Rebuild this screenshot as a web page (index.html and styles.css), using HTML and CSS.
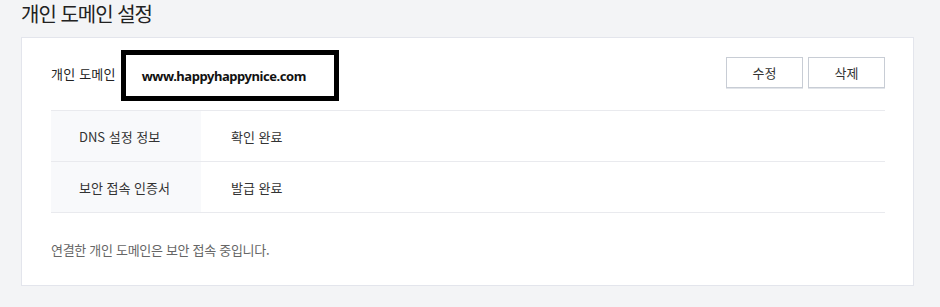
FILE: index.html
```html
<!DOCTYPE html>
<html lang="ko">
<head>
<meta charset="utf-8">
<link rel="stylesheet" href="styles.css">
</head>
<body>
<div class="page">
  <h1 class="title">개인 도메인 설정</h1>
  <section class="card">
    <div class="domain-row">
      <span class="domain-label">개인 도메인</span>
      <div class="domain-box">www.happyhappynice.com</div>
      <div class="actions">
        <button class="btn">수정</button>
        <button class="btn">삭제</button>
      </div>
    </div>
    <div class="info-table">
      <div class="info-row">
        <div class="info-key">DNS 설정 정보</div>
        <div class="info-val">확인 완료</div>
      </div>
      <div class="info-row">
        <div class="info-key">보안 접속 인증서</div>
        <div class="info-val">발급 완료</div>
      </div>
    </div>
    <p class="note">연결한 개인 도메인은 보안 접속 중입니다.</p>
  </section>
</div>
</body>
</html>
```
FILE: styles.css
```css
html, body {
  margin: 0;
  padding: 0;
  background: #f3f4f6;
}
body {
  font-family: "Noto Sans CJK KR", "Noto Sans", sans-serif;
  color: #333;
}
.page {
  width: 940px;
  height: 307px;
  padding: 0 26px 0 21px;
  box-sizing: border-box;
}
.title {
  margin: 0;
  height: 35px;
  padding-top: 2px;
  font-size: 20px;
  font-weight: 400;
  line-height: 24px;
  letter-spacing: -1px;
  color: #222;
}
.card {
  background: #fff;
  border: 1px solid #e3e5ec;
  width: 893px;
  box-sizing: border-box;
  padding: 0 28px 0 29px;
}
.domain-row {
  height: 72px;
  display: flex;
  align-items: center;
}
.domain-label {
  font-size: 13px;
  color: #222;
  margin-top: -1px;
  letter-spacing: 0.2px;
}
.domain-box {
  margin-left: 5px;
  margin-top: 3px;
  width: 218px;
  height: 51px;
  box-sizing: border-box;
  border: 5px solid #000;
  padding-left: 16px;
  display: flex;
  align-items: center;
  font-family: "Noto Sans", "Noto Sans CJK KR", sans-serif;
  font-size: 13px;
  font-weight: 700;
  color: #111;
  letter-spacing: -0.45px;
}
.actions {
  margin-left: auto;
  display: flex;
  gap: 5px;
  margin-top: -3px;
}
.btn {
  width: 77px;
  height: 31px;
  background: #fff;
  border: 1px solid #c8cdd5;
  box-shadow: 0 1px 0 #e2e5ea;
  font-family: "Noto Sans CJK KR", sans-serif;
  font-size: 13px;
  color: #333;
  padding: 0;
}
.info-table {
  border-top: 1px solid #e9eaee;
}
.info-row {
  display: flex;
  height: 51px;
  border-bottom: 1px solid #e9eaee;
  box-sizing: border-box;
  font-size: 13px;
}
.info-key {
  width: 150px;
  background: #f8f9fb;
  padding-left: 28px;
  box-sizing: border-box;
  display: flex;
  align-items: center;
}
.info-val {
  padding-left: 30px;
  display: flex;
  align-items: center;
}
.note {
  margin: 0;
  height: 72px;
  display: flex;
  align-items: center;
  font-size: 13px;
  letter-spacing: -0.3px;
  color: #666;
}
```
